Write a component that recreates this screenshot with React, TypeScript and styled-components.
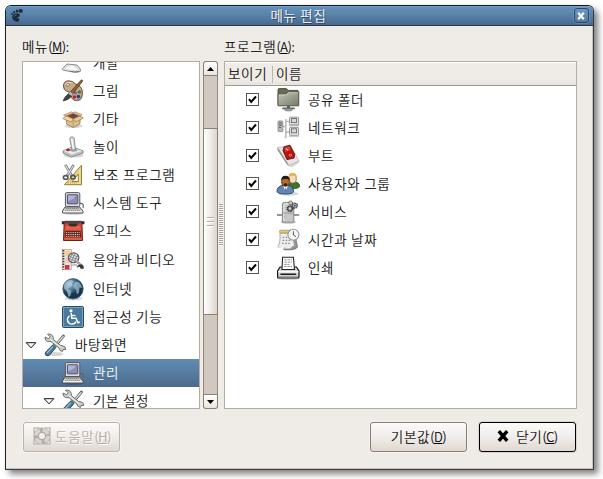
import React from "react";
import styled, { createGlobalStyle, css } from "styled-components";

const GlobalStyle = createGlobalStyle`
  html, body { margin: 0; background: #fff; }
  * { box-sizing: border-box; }
  body {
    display: flow-root;
    height: 479px;
    font-family: "Noto Sans CJK KR", "Liberation Sans", sans-serif;
    font-size: 13.5px;
    font-weight: 300;
    letter-spacing: 0.7px;
    -webkit-text-stroke: 0.2px currentColor;
    color: #000;
  }
`;

/* ---------- window frame ---------- */

const Window = styled.main`
  width: 589px;
  height: 465px;
  margin: 5px 0 0 5px;
  display: flex;
  flex-direction: column;
  background: #efebe7;
  border: 1px solid #383c42;
  border-top-color: #101820;
  border-left-color: #1c2126;
  border-radius: 6px 6px 0 0;
  box-shadow: inset -1px -1px 0 #cbc2b8, 4px 4px 6px rgba(0, 0, 0, 0.5);
`;

const TitleBar = styled.header`
  height: 20px;
  flex: none;
  display: flex;
  align-items: center;
  justify-content: space-between;
  padding: 0 4px 0 4px;
  border-bottom: 1px solid #26394b;
  border-radius: 5px 5px 0 0;
  background: linear-gradient(#8db2d6 0, #6590b9 1px, #5a84ac 45%, #49698a 100%);
`;

const Title = styled.h1`
  margin: -2px 0 0 -1px;
  font-size: 13.5px;
  font-weight: 300;
  line-height: 18px;
  color: #fff;
  text-shadow: 1px 1px 0 #24384c;
`;

const CloseBox = styled.button`
  width: 15px;
  height: 15px;
  padding: 0;
  display: grid;
  place-items: center;
  border: 1px solid #2d4863;
  border-radius: 3px;
  background: linear-gradient(#6c97c0, #5379a0);
  box-shadow: 0 0 0 0.5px #7da3c9;
`;

const Content = styled.div`
  flex: 1;
  display: flex;
  flex-direction: column;
  padding: 11px 16px 16px;
`;

const Panes = styled.div`
  display: flex;
  height: 372px;
`;

const Pane = styled.section<{ $width: number }>`
  width: ${(p) => p.$width}px;
  display: flex;
  flex-direction: column;
`;

const PaneLabel = styled.label`
  height: 24px;
  line-height: 18px;
  white-space: nowrap;
`;

const Latin = styled.span`
  font-size: 13px;
  letter-spacing: -0.3px;
  u { text-underline-offset: 1px; text-decoration-thickness: 1px; }
`;

const frame = css`
  border: 1px solid #b8aca0;
  background: #fff;
`;

/* ---------- menu tree ---------- */

const TreeArea = styled.div`
  display: flex;
  gap: 3px;
  height: 348px;
`;

const Tree = styled.div`
  ${frame}
  width: 178px;
  overflow: hidden;
  display: flex;
  flex-direction: column;
`;

const TreeRow = styled.div<{ $level: number; $height?: number; $selected?: boolean }>`
  flex: none;
  height: ${(p) => p.$height ?? 28}px;
  display: flex;
  align-items: center;
  padding-left: ${(p) => 2 + p.$level * 18}px;
  color: ${(p) => (p.$selected ? "#fff" : "#000")};
  background: ${(p) => (p.$selected ? "linear-gradient(#628cb3, #4b6b8d)" : "none")};
  &:first-child { margin-top: -13px; }
`;

const Expander = styled.span`
  width: 18px;
  flex: none;
  display: flex;
`;

const ItemText = styled.span`
  margin-left: 8px;
  padding-bottom: 2px;
  line-height: 20px;
  white-space: nowrap;
`;

/* ---------- scrollbar ---------- */

const ScrollBar = styled.div`
  width: 15px;
  display: flex;
  flex-direction: column;
  border: 1px solid #94887c;
  border-radius: 3px;
  background: #d1c8c0;
`;

const Stepper = styled.div<{ $end?: boolean }>`
  height: 15px;
  flex: none;
  margin: ${(p) => (p.$end ? "auto -1px -1px" : "-1px -1px 0")};
  display: grid;
  place-items: center;
  border: 1px solid #8b8076;
  border-radius: ${(p) => (p.$end ? "0 0 3px 3px" : "3px 3px 0 0")};
  background: linear-gradient(#fff, #e9e4df);
`;

const Thumb = styled.div`
  height: 187px;
  margin: 52px -1px 0;
  display: flex;
  flex-direction: column;
  align-items: center;
  justify-content: center;
  gap: 2px;
  border: 1px solid #8b8076;
  background: linear-gradient(90deg, #fff 0, #f4f2f0 35%, #ddd6cf 100%);
`;

const ThumbLine = styled.i`
  width: 7px;
  height: 2px;
  border-top: 1px solid #b9aea4;
  border-bottom: 1px solid #fff;
`;

const Divider = styled.div`
  width: 6px;
  display: flex;
  align-items: center;
  justify-content: center;
  padding-top: 4px;
`;

const Grip = styled.div`
  width: 4px;
  height: 42px;
  background: repeating-linear-gradient(#aaa097 0 1px, #fbfaf9 1px 2px);
`;

/* ---------- program list ---------- */

const List = styled.div`
  ${frame}
  height: 348px;
`;

const ListHead = styled.div`
  height: 24px;
  display: flex;
  align-items: center;
  border-top: 1px solid #fff;
  border-bottom: 1px solid #a59a90;
  background: linear-gradient(#efebe7 80%, #e6e1db);
`;

const HeadCell = styled.div<{ $width?: number }>`
  width: ${(p) => (p.$width ? p.$width + "px" : "auto")};
  height: 17px;
  padding-left: 3px;
  line-height: 14px;
  white-space: nowrap;
  border-right: ${(p) => (p.$width ? "1px solid #bfb5ab" : "none")};
`;

const ListRow = styled.div`
  height: 28px;
  display: flex;
  align-items: center;
  padding-left: 21px;
`;

const Check = styled.span`
  width: 13px;
  height: 13px;
  margin: -1px 17px 0 0;
  display: grid;
  place-items: center;
  border: 1px solid #5d564f;
  background: #fff;
`;

/* ---------- action buttons ---------- */

const Actions = styled.footer`
  display: flex;
  margin: 13px 0 0 1px;
  width: 553px;
`;

const Button = styled.button<{ $kind?: "default" | "disabled" }>`
  width: 97px;
  height: 30px;
  padding: 0 0 2px;
  display: flex;
  align-items: center;
  justify-content: center;
  gap: ${(p) => (p.$kind === "disabled" ? 3 : 7)}px;
  font: inherit;
  letter-spacing: inherit;
  white-space: nowrap;
  color: ${(p) => (p.$kind === "disabled" ? "#b5aaa0" : "#000")};
  text-shadow: ${(p) => (p.$kind === "disabled" ? "1px 1px 0 #fff" : "none")};
  border: 1px solid
    ${(p) => (p.$kind === "default" ? "#000" : p.$kind === "disabled" ? "#bfb3a8" : "#897c70")};
  border-radius: 3px;
  background: linear-gradient(#fcfbfa, #efebe8 55%, #e0d8d1);
  box-shadow: 0 0 0 1px ${(p) => (p.$kind === "default" ? "#dcd4cc" : "#f5f2f0")};
  & + & { margin-left: 12px; }
  &:first-child { margin-right: auto; }
`;

/* ---------- icons ---------- */

const Svg = styled.svg`
  width: 24px;
  height: 24px;
  flex: none;
  display: block;
`;

const Shade = ({ cy = 20.5, rx = 9 }: { cy?: number; rx?: number }) => (
  <ellipse cx="12.5" cy={cy} rx={rx} ry="2" fill="#000" opacity=".16" />
);

const DevIcon = () => (
  <Svg viewBox="0 0 24 24">
    <path d="M2.5 16.5 Q-.5 18.5 3 19.3 L12 21 Q17 22 19.5 20.3 Q20.5 18.5 16 14 L6 13 Z" fill="#ddd" stroke="#8c8c8c" />
    <path d="M4 17.2 L11 14 L17 18.8 Q10 20 4 17.2Z" fill="#f6f6f6" />
    <path d="M9 20.3 Q14 21.6 18.5 20.2" stroke="#777" fill="none" />
  </Svg>
);

const PaintIcon = () => (
  <Svg viewBox="0 0 24 24">
    <path d="M13 21.6 Q21 24 21.6 17 L22.5 9 L18 19Z" fill="#000" opacity=".25" />
    <path d="M2.5 7 Q2.5 2 7.5 1.8 Q12 1.6 14.5 5 Q20.5 6 21.3 13 Q21.8 21 15.5 21.5 Q10.5 21.5 10 16 Q9 12.5 5.5 12 Q2.5 11 2.5 7Z" fill="#c6ab89" stroke="#6e5336" />
    <path d="M4 5.5 Q6 2.5 10.5 3.5" stroke="#f0dfc5" fill="none" />
    <ellipse cx="7" cy="5.8" rx="1.5" ry="1.2" fill="#fff" stroke="#6c553b" strokeWidth=".7" />
    <circle cx="13.4" cy="18" r="1.8" fill="#b82238" />
    <circle cx="17.4" cy="17.6" r="1.8" fill="#2d397f" />
    <circle cx="18.4" cy="13" r="1.8" fill="#3f813a" />
    <circle cx="14.6" cy="13.9" r="1.6" fill="#7764a4" />
    <path d="M20.5 .8 L21.8 1.8 L12 14.6 L9.4 12.9Z" fill="#9b6135" stroke="#4c2d18" strokeWidth=".8" />
    <path d="M9.2 12.4 L12.2 14.6 L10.3 17.4 L7 15.2Z" fill="#bfc2c4" stroke="#555" strokeWidth=".6" />
    <path d="M7.2 15 L10.4 17.4 Q7.5 21 2 22 Q4 17 7.2 15Z" fill="#49433f" stroke="#222" strokeWidth=".6" />
  </Svg>
);

const BoxIcon = () => (
  <Svg viewBox="0 0 24 24">
    <Shade cy={19} />
    <path d="M5 9 L12 6 L19.5 9 L18.8 17 L12.2 20.5 L5.6 17Z" fill="#dbbf8e" stroke="#987345" strokeWidth=".8" />
    <path d="M6 8.7 L12 6.5 L18.5 8.8 L12.3 12Z" fill="#69472e" />
    <circle cx="10" cy="9" r="1.5" fill="#b52a29" />
    <circle cx="13" cy="8.6" r="1.4" fill="#384c9a" />
    <circle cx="14.8" cy="9.5" r="1.1" fill="#8a4a3a" />
    <path d="M5.2 9 L12.2 12 L10 15 L1.8 11.5Z" fill="#f0d8a9" stroke="#a37f50" strokeWidth=".8" />
    <path d="M19 9 L12.2 12 L15 15 L22.2 11Z" fill="#e8ca95" stroke="#a37f50" strokeWidth=".8" />
    <path d="M4.6 9 L2.6 8.2 L10.5 4.8 L12.2 6.2ZM19.2 9 L21 7.8 L14 4.8 L12.2 6.2Z" fill="#e7cf9f" stroke="#a37f50" strokeWidth=".7" />
    <path d="M12.2 13 V20" stroke="#b18a56" strokeWidth=".8" />
  </Svg>
);

const JoystickIcon = () => (
  <Svg viewBox="0 0 24 24">
    <Shade cy={20.5} rx={10} />
    <path d="M2.2 15.8 L11.5 12 L22 15.8 V18.2 L10.3 22 L2.2 18.2Z" fill="#c3c3c4" stroke="#87898b" />
    <path d="M2.8 15.7 L11.5 12.4 L21 15.8 L10.5 19.2Z" fill="#eee" />
    <ellipse cx="12.6" cy="15" rx="4" ry="1.7" fill="#a4a6a9" />
    <path d="M10.8 15 L8.8 4 Q9 1.5 11.5 1.8 Q13.5 2.3 13.4 5 L14.5 15Z" fill="#d7d8d9" stroke="#85888a" strokeWidth=".9" />
    <path d="M10.7 4 L12.3 13" stroke="#fff" strokeWidth="1.2" />
    <ellipse cx="7" cy="15" rx="2" ry="1.2" fill="#a92828" />
  </Svg>
);

const AccessoriesIcon = () => (
  <Svg viewBox="0 0 24 24">
    <path d="M20.5 2.2 V21.7 H3.5Z M17.3 11 L11.2 18.5 H17.3Z" fill="#ecd27b" fillRule="evenodd" stroke="#8b7132" strokeWidth=".9" />
    <path d="M18.8 6 V20.3 H7" fill="none" stroke="#f8e7a5" strokeWidth=".8" />
    <path d="M7.5 20.5v-1.2m2 1.2v-1.2m2 1.2v-1.2m2 1.2v-1.2m2 1.2v-1.2" stroke="#9b813b" strokeWidth=".6" />
    <path d="M4.3 1.8 L11 13 M12.6 2 L5.9 13" stroke="#6f7477" strokeWidth="2.6" />
    <path d="M4.5 2.4 L10.5 12.5 M12.3 2.6 L6.2 12.5" stroke="#d6d9db" strokeWidth="1.2" />
    <ellipse cx="4.7" cy="14.4" rx="2.3" ry="1.8" fill="none" stroke="#55575a" strokeWidth="1.6" />
    <ellipse cx="12" cy="14.2" rx="2.2" ry="1.8" fill="none" stroke="#55575a" strokeWidth="1.6" />
  </Svg>
);

const ComputerIcon = () => (
  <Svg viewBox="0 0 24 24">
    <Shade cy={22} rx={10} />
    <path d="M18.5 12.5 Q23.5 11.5 22 17" fill="none" stroke="#5f636a" strokeWidth="1.2" />
    <rect x="4.4" y="1.6" width="14.4" height="14" rx="1.4" fill="#dedddb" stroke="#54585f" />
    <rect x="6.4" y="3.8" width="10.4" height="9" rx=".5" fill="#8c8cb8" stroke="#4c506f" />
    <path d="M7 4.6 H15 Q13 9 7 10Z" fill="#b3b3d4" />
    <path d="M4 16 H18.6 L22 20 V22 H1.5 V20Z" fill="#d5d4d1" stroke="#4e5054" />
    <path d="M5 17.5 H18 M4 19.2 H19.5" stroke="#7f7f7d" strokeWidth=".9" strokeDasharray="1.5 .4" />
    <path d="M2 20.7 H21.5" stroke="#fff" strokeWidth=".8" />
  </Svg>
);

const TypewriterIcon = () => (
  <Svg viewBox="0 0 24 24">
    <path d="M.8 3.8 H4 M20 3.8 H23.4" stroke="#26292b" strokeWidth="3" />
    <path d="M3.2 3 H20.8 L21.3 14 L21.5 21.5 H2.5 L2.8 14Z" fill="#d04632" stroke="#6d2018" />
    <rect x="4" y="1.8" width="16.2" height="2.6" fill="#4b4745" />
    <path d="M5 7 H19 L20.3 10.8 H3.8Z" fill="#ee5f48" />
    <path d="M7 4.4 H17 L15 7.6 H9Z" fill="#332e2d" />
    <path d="M4.4 12 H19.6 L20 18.3 H4Z" fill="#4d2a25" />
    <path d="M5 13.6H19M5 15.5H19M5 17.3H19" stroke="#e7b9a8" strokeWidth="1" strokeDasharray="1.1 .7" />
    <path d="M3.5 20 H20.5" stroke="#e9745f" />
  </Svg>
);

const MediaIcon = () => (
  <Svg viewBox="0 0 24 24">
    <rect x="1.2" y="1.4" width="9" height="20.4" fill="#eee2d8" stroke="#a78b82" strokeWidth=".6" />
    <path d="M2.4 2V21.5" stroke="#4c3535" strokeWidth="1.8" strokeDasharray="1.5 1.2" />
    <rect x="4.4" y="3" width="5.5" height="5" fill="#f4ce88" />
    <rect x="4.4" y="10" width="5.5" height="5" fill="#f2c9c0" />
    <path d="M4 17H8.4V21.5H4Z" fill="#cb3448" />
    <ellipse cx="12.6" cy="9.8" rx="5.3" ry="4.9" fill="#e4e5e6" stroke="#55565c" strokeWidth="1.1" />
    <path d="M8.2 8.3 L17 11.5 M8 10.5 L16 13.5 M10 6.3 L17.2 9 M10.4 13.7 L14.2 5.2 M13 14 L16.8 7 M8 11.6 L11.6 5.5" stroke="#6c6d72" strokeWidth=".7" />
    <path d="M15.5 13 L19.5 17" stroke="#a6a8aa" strokeWidth="2.6" />
    <path d="M9.5 17.5 L15 16.5 L17 19" fill="none" stroke="#b9bcbd" strokeWidth="1.6" />
    <path d="M15.5 19.5 Q18 15.5 21.3 16.5 Q23.2 18 22.8 20.8 H19.6 L18.8 18.8Z" fill="#34383c" />
  </Svg>
);

const GlobeIcon = () => (
  <Svg viewBox="0 0 24 24">
    <defs>
      <radialGradient id="globe" cx="36%" cy="28%">
        <stop offset="0" stopColor="#a2c7de" />
        <stop offset=".5" stopColor="#527d9e" />
        <stop offset="1" stopColor="#18344d" />
      </radialGradient>
    </defs>
    <Shade cy={21.4} />
    <circle cx="12" cy="11.8" r="10.2" fill="url(#globe)" stroke="#3b5a72" strokeWidth=".8" />
    <path d="M3 8 Q5 3.5 9.7 3 L13 4 L10.7 6 L11.5 8 L8.5 10 L7.3 12 L10.5 14 L9.3 19 L7.5 19.8 L5.8 14 L3.2 11.5Z" fill="#b7d0dd" opacity=".65" />
    <path d="M14 5 L17.5 4.7 Q21 7.5 21 11 L18.5 10.4 L18 15.5 L15.7 17.5 L15.2 13 L12.5 10 L13.3 7.3Z" fill="#afc9d8" opacity=".65" />
  </Svg>
);

const AccessIcon = () => (
  <Svg viewBox="0 0 24 24">
    <rect x="1.5" y="1.5" width="21" height="21" rx="1.2" fill="#4b7b9c" stroke="#254e6c" />
    <path d="M2.5 21.5 V2.5 H21.5 V21.5Z" fill="none" stroke="#87a9c0" strokeWidth=".8" />
    <circle cx="10" cy="5.8" r="1.6" fill="#fff" />
    <path d="M10.2 8 L10.8 13.2 H15 L17 17.8 L18.8 17" fill="none" stroke="#fff" strokeWidth="1.5" />
    <path d="M10.5 10.5 H14.5" stroke="#fff" strokeWidth="1.2" />
    <path d="M8.6 10.8 A4.5 4.5 0 1 0 15 16.6" fill="none" stroke="#fff" strokeWidth="1.4" />
  </Svg>
);

const ToolsIcon = () => (
  <Svg viewBox="0 0 24 24">
    <Shade cy={21} rx={8} />
    <path d="M20.5 3 L13 12" stroke="#5b6062" strokeWidth="2.8" strokeLinecap="round" />
    <path d="M20.5 3.3 L12 12.5" stroke="#dee2e2" strokeWidth="1.3" />
    <path d="M10.2 11.6 L13 14.4 L6.2 22.4 Q3.8 23.6 2.2 21.6 Q2 19.4 3.7 18Z" fill="#4a7d9d" stroke="#24485f" />
    <path d="M9.8 13.6 L4 20" stroke="#a0c4d7" strokeWidth="1.1" />
    <path d="M4.5 1.2 L7.1 3.8 L5.5 5.8 L2 4 Q1.6 7.6 4.6 8.6 L8 8.6 L16 15 Q16.5 18.4 19.6 18.4 L20 16.6 L22.8 16.4 Q22.7 13 19 12.6 L17.5 12.4 L10.4 6.6 Q10.6 1.4 6 1Z" fill="#cccfc9" stroke="#60645f" strokeWidth=".9" />
    <path d="M7.5 6.5 L18 14.6" stroke="#f1f2ed" />
  </Svg>
);

const FolderIcon = () => (
  <Svg viewBox="0 0 24 24">
    <defs>
      <linearGradient id="folder" x2="1" y2="1">
        <stop stopColor="#c5c8b2" />
        <stop offset="1" stopColor="#73786a" />
      </linearGradient>
    </defs>
    <path d="M2 17 V2 Q2 .6 3 .6 H10 Q11.5 .6 11.5 2.4 H22 V17Z" fill="#676b57" stroke="#454938" strokeWidth=".9" />
    <path d="M2 17.8 V6 H10 L12 3.8 H22.8 V17.8Z" fill="url(#folder)" stroke="#52563f" strokeWidth=".9" />
    <path d="M3.2 6.9 H10.4 L12.4 4.8 H21.8" stroke="#dcdfcf" strokeWidth=".7" fill="none" />
    <path d="M12.5 18 V21" stroke="#59605c" strokeWidth="3" />
    <path d="M7 20.4 H18" stroke="#5d6866" strokeWidth="1.7" strokeLinecap="round" />
    <ellipse cx="12.5" cy="21.8" rx="4" ry="1.2" fill="#9ba8a2" stroke="#56605b" strokeWidth=".5" />
  </Svg>
);

const NetworkIcon = () => (
  <Svg viewBox="0 0 24 24">
    <path d="M7 10.5 H10 M9.8 3 V21.5 M10 5.5 H14 M10 16 H14" fill="none" stroke="#b4b7b6" strokeWidth="1.4" />
    <rect x="2" y="5" width="4.8" height="10.6" rx=".6" fill="#b5b7b5" stroke="#959896" />
    <path d="M3 7H6M3 9.2H6M3 11.5H5" stroke="#4e5351" strokeWidth=".9" />
    <rect x="13.6" y="1.2" width="9" height="7.6" rx=".8" fill="#e1e2e0" stroke="#929592" />
    <rect x="15.4" y="2.6" width="5.2" height="4" fill="#d4dade" stroke="#5d6269" strokeWidth=".8" />
    <rect x="13.6" y="11.4" width="9" height="8" rx=".8" fill="#e1e2e0" stroke="#929592" />
    <rect x="15.4" y="12.8" width="5.2" height="4" fill="#d4dade" stroke="#5d6269" strokeWidth=".8" />
    <path d="M13 9.6H23M13 20.2H23" stroke="#b5b8b5" strokeWidth="1.2" />
    <circle cx="9.8" cy="21" r="1.3" fill="#c4c7c7" />
  </Svg>
);

const BootIcon = () => (
  <Svg viewBox="0 0 24 24">
    <path d="M4 5 L14 3 L23.6 18.5 L16 23.4 L11 21.6Z" fill="#000" opacity=".15" />
    <path d="M1.6 3.6 L14.4 1.4 L23 17 L13 21.6Z" fill="#e7e6e3" stroke="#b5b3b0" strokeWidth=".8" />
    <path d="M1.6 3.8 L13 21.6 L10.8 20 L1.4 6Z" fill="#8c8987" />
    <path d="M7 6.5 L8 3 L13.8 1.2 L18.6 10.2 L18 14 L11 15.6Z" fill="#b8160f" stroke="#731310" />
    <path d="M8.3 3.8 L13.4 2.2 L14.8 5.8 L9.4 8Z" fill="#d8402f" />
    <path d="M10.6 4.6 L11.6 6.4" stroke="#fff" />
    <ellipse cx="14.4" cy="11.2" rx="1.2" ry="1" fill="none" stroke="#ffb6a5" strokeWidth=".7" />
  </Svg>
);

const UsersIcon = () => (
  <Svg viewBox="0 0 24 24">
    <Shade cy={21.7} rx={10} />
    <path d="M12.5 16 Q12 10.6 17 9.6 Q23.8 10 23.8 14.6 Q22 17 16 16.4Z" fill="#39772d" stroke="#22511d" strokeWidth=".8" />
    <rect x="13.2" y="1.6" width="7" height="9.5" rx="3" fill="#f3dcc0" stroke="#9d6a20" strokeWidth=".8" />
    <path d="M13 7 V4 Q13.2 .8 16.5 .8 Q20.8 1 20.4 5.5 L20 8 L19 4 H14.5Z" fill="#e5b557" />
    <path d="M1 19.6 Q.8 14.4 7 13.3 H12 Q17.6 14.4 17.6 19.6 Q17 22 9.4 22 Q1.6 22 1 19.6Z" fill="#6285b2" stroke="#2c4b76" />
    <path d="M7 13.5 L9.7 20 L12 13.5Z" fill="#fff" />
    <path d="M9.7 15 L8.8 18.6 L9.8 20.6 L10.8 18.6Z" fill="#587098" />
    <rect x="5.7" y="4.8" width="7.6" height="9.4" rx="3.1" fill="#b5692a" stroke="#5d3213" strokeWidth=".8" />
    <path d="M5.4 9 Q4.9 3.8 9.5 3.8 Q14 3.8 13.5 9 L12.3 7 H6.7Z" fill="#211c19" />
    <path d="M7.5 12 Q9.5 10.5 11.5 12 L10.6 14 H8.4Z" fill="#312018" />
  </Svg>
);

const ServicesIcon = () => (
  <Svg viewBox="0 0 24 24">
    <Shade cy={22} rx={8} />
    <path d="M1 15H7M17.5 15H23.2" stroke="#727574" strokeWidth="1.3" />
    <path d="M6.4 22.2 V4 Q6.4 2.4 8.7 2.4 H15.5 L17.8 5 V22.2Z" fill="#c6c8c6" stroke="#858886" />
    <path d="M7.9 21V5 Q8 3.8 10 3.8H13" fill="none" stroke="#ececea" />
    <path d="M6.8 13 H17.5 M8.8 15.5V17.5" stroke="#888b88" strokeWidth=".8" />
    <circle cx="14.6" cy="2.8" r="1.9" fill="#c7c9c6" stroke="#484b4a" strokeDasharray="1.1 .5" />
    <circle cx="18.8" cy="5.6" r="2.5" fill="#b1b4b1" stroke="#414443" strokeWidth="1.4" strokeDasharray="1.2 .5" />
    <circle cx="14" cy="8.6" r="2.7" fill="#838684" stroke="#323534" strokeWidth="1.5" strokeDasharray="1.2 .5" />
    <circle cx="14" cy="8.6" r="1.1" fill="#ddd" />
    <circle cx="18.8" cy="5.6" r=".8" fill="#333" />
  </Svg>
);

const DateIcon = () => (
  <Svg viewBox="0 0 24 24">
    <path d="M5.5 4.5H18.5L21.5 19Q20 22.5 8 21.8Z" fill="#92948f" stroke="#6f7270" strokeWidth=".8" />
    <rect x="3.6" y="2.2" width="12" height="3" rx=".6" fill="#e6c473" stroke="#9b8446" strokeWidth=".6" />
    <path d="M4 5.2H16.2L18.5 17.3L14.5 20.4L1.8 19Q4.6 15 4 5.2Z" fill="#eceeee" stroke="#979a99" strokeWidth=".8" />
    <path d="M6.7 9.4H12M6.7 12.4H15M6.2 15.4H14" stroke="#858b8f" strokeWidth="1.3" strokeDasharray="1.5 1.5" />
    <path d="M2.3 18.7 Q9 20.7 14.5 19.8" stroke="#fff" strokeWidth="1" fill="none" />
    <circle cx="17.4" cy="6.8" r="5.5" fill="#f4f5f4" stroke="#929694" strokeWidth="1.1" />
    <path d="M17.4 3.3V7L19.9 8.7" fill="none" stroke="#454847" strokeWidth=".9" />
  </Svg>
);

const PrinterIcon = () => (
  <Svg viewBox="0 0 24 24">
    <Shade cy={22.4} rx={10.5} />
    <path d="M4 11H20.4L23 15V21 Q23 22 22 22 H2.6 Q1.6 22 1.6 21 V15Z" fill="#cfd1ce" stroke="#171918" strokeWidth="1.2" />
    <path d="M6 13.5 L6.6 1.2H17.4L18.5 13.5Z" fill="#fff" stroke="#242625" strokeWidth="1.1" />
    <path d="M8.3 3.8H16M8.3 6.1H16M8 8.4H13.5M8 10.6H16" stroke="#929894" strokeWidth="1" strokeDasharray="2.6 .7" />
    <path d="M2.4 15.8H22.2" stroke="#fff" strokeWidth="1.5" />
    <rect x="4.2" y="17.4" width="16" height="1.7" rx=".8" fill="#1d1f1e" />
    <path d="M2.6 20.8H22" stroke="#858884" strokeWidth=".8" />
  </Svg>
);

const Glyph = styled.svg`
  display: block;
  flex: none;
  overflow: visible;
`;

const HelpRing = () => (
  <Glyph width="20" height="20" viewBox="0 0 20 20">
    <path d="M2 7.5 V2 H7.5 M12.5 2 H18 V7.5 M18 12.5 V18 H12.5 M7.5 18 H2 V12.5" fill="none" stroke="#c5beb8" strokeWidth="1.6" />
    <circle cx="10" cy="10" r="6.1" fill="none" stroke="#b4ada7" strokeWidth="5" />
    <circle cx="10" cy="10" r="6.1" fill="none" stroke="#d9d4cf" strokeWidth="3.4" strokeDasharray="6.6 3" />
    <circle cx="10" cy="10" r="3.6" fill="#f3f1ef" stroke="#aaa49f" />
  </Glyph>
);

const Foot = () => (
  <Glyph width="14" height="14" viewBox="0 0 14 14">
    <g fill="#1c2c3a">
      <path d="M5 4.8 Q9.5 3.2 9.9 6 Q9.9 8 7.6 8.4 Q6.5 8.8 8 9.6 Q8.6 8.7 9.4 9.7 Q9.5 12.8 7 12.8 Q3.3 12.2 2.1 8.5 Q2.1 5.6 5 4.8Z" />
      <ellipse cx="10.6" cy="1.9" rx="2.3" ry="1.9" />
      <ellipse cx="6.9" cy="2.1" rx="1.2" ry="1.6" />
      <ellipse cx="4.1" cy="3.2" rx="1" ry="1.3" />
      <ellipse cx="1.9" cy="5" rx=".9" ry="1.1" />
    </g>
    <path d="M3.8 7.6 Q4.4 6.2 6.4 6" fill="none" stroke="#5f7489" strokeWidth=".8" />
  </Glyph>
);

const Arrow = ({ up }: { up?: boolean }) => (
  <Glyph width="7" height="4" viewBox="0 0 7 4">
    <path d={up ? "M0 4 L3.5 0 L7 4Z" : "M0 0 H7 L3.5 4Z"} fill="#000" />
  </Glyph>
);

const OpenTriangle = () => (
  <Glyph width="12" height="7" viewBox="0 0 12 7">
    <path d="M1.2 .7 H10.8 L6 5.8Z" fill="#fff" stroke="#111" />
  </Glyph>
);

const Tick = () => (
  <Glyph width="9" height="9" viewBox="0 0 9 9">
    <path d="M1 4.2 L3.2 7 L8 1.5" fill="none" stroke="#000" strokeWidth="2" />
  </Glyph>
);

const Cross = ({ size, color }: { size: number; color: string }) => (
  <Glyph width={size} height={size} viewBox="0 0 10 10">
    <path d="M1.5 1 L8.5 9 M8.5 1 L1.5 9" stroke={color} strokeWidth="2.9" />
  </Glyph>
);

/* ---------- data ---------- */

type TreeItem = {
  name: string;
  icon: React.ComponentType;
  level: number;
  open?: boolean;
  height?: number;
  selected?: boolean;
};

const menus: TreeItem[] = [
  { name: "개발", icon: DevIcon, level: 2 },
  { name: "그림", icon: PaintIcon, level: 2 },
  { name: "기타", icon: BoxIcon, level: 2 },
  { name: "놀이", icon: JoystickIcon, level: 2 },
  { name: "보조 프로그램", icon: AccessoriesIcon, level: 2 },
  { name: "시스템 도구", icon: ComputerIcon, level: 2 },
  { name: "오피스", icon: TypewriterIcon, level: 2 },
  { name: "음악과 비디오", icon: MediaIcon, level: 2, height: 30 },
  { name: "인터넷", icon: GlobeIcon, level: 2 },
  { name: "접근성 기능", icon: AccessIcon, level: 2 },
  { name: "바탕화면", icon: ToolsIcon, level: 0, open: true },
  { name: "관리", icon: ComputerIcon, level: 2, selected: true },
  { name: "기본 설정", icon: ToolsIcon, level: 1, open: true },
];

const programs = [
  { name: "공유 폴더", icon: FolderIcon },
  { name: "네트워크", icon: NetworkIcon },
  { name: "부트", icon: BootIcon },
  { name: "사용자와 그룹", icon: UsersIcon },
  { name: "서비스", icon: ServicesIcon },
  { name: "시간과 날짜", icon: DateIcon },
  { name: "인쇄", icon: PrinterIcon },
];

const Mnemonic = ({ letter, colon }: { letter: string; colon?: boolean }) => (
  <Latin>
    (<u>{letter}</u>){colon ? ":" : ""}
  </Latin>
);

export default function App() {
  return (
    <>
      <GlobalStyle />
      <Window>
        <TitleBar>
          <Foot />
          <Title>메뉴 편집</Title>
          <CloseBox aria-label="닫기">
            <Cross size={8} color="#fff" />
          </CloseBox>
        </TitleBar>
        <Content>
          <Panes>
            <Pane $width={196}>
              <PaneLabel>
                메뉴
                <Mnemonic letter="M" colon />
              </PaneLabel>
              <TreeArea>
                <Tree>
                  {menus.map(({ name, icon: Icon, level, open, height, selected }) => (
                    <TreeRow key={name} $level={level} $height={height} $selected={selected}>
                      {open && (
                        <Expander>
                          <OpenTriangle />
                        </Expander>
                      )}
                      <Icon />
                      <ItemText>{name}</ItemText>
                    </TreeRow>
                  ))}
                </Tree>
                <ScrollBar>
                  <Stepper>
                    <Arrow up />
                  </Stepper>
                  <Thumb>
                    <ThumbLine />
                    <ThumbLine />
                    <ThumbLine />
                  </Thumb>
                  <Stepper $end>
                    <Arrow />
                  </Stepper>
                </ScrollBar>
              </TreeArea>
            </Pane>
            <Divider>
              <Grip />
            </Divider>
            <Pane $width={353}>
              <PaneLabel>
                프로그램
                <Mnemonic letter="A" colon />
              </PaneLabel>
              <List>
                <ListHead>
                  <HeadCell $width={48}>보이기</HeadCell>
                  <HeadCell>이름</HeadCell>
                </ListHead>
                {programs.map(({ name, icon: Icon }) => (
                  <ListRow key={name}>
                    <Check>
                      <Tick />
                    </Check>
                    <Icon />
                    <ItemText>{name}</ItemText>
                  </ListRow>
                ))}
              </List>
            </Pane>
          </Panes>
          <Actions>
            <Button $kind="disabled">
              <HelpRing />
              <span>
                도움말
                <Mnemonic letter="H" />
              </span>
            </Button>
            <Button>
              <span>
                기본값
                <Mnemonic letter="D" />
              </span>
            </Button>
            <Button $kind="default">
              <Cross size={12} color="#000" />
              <span>
                닫기
                <Mnemonic letter="C" />
              </span>
            </Button>
          </Actions>
        </Content>
      </Window>
    </>
  );
}
